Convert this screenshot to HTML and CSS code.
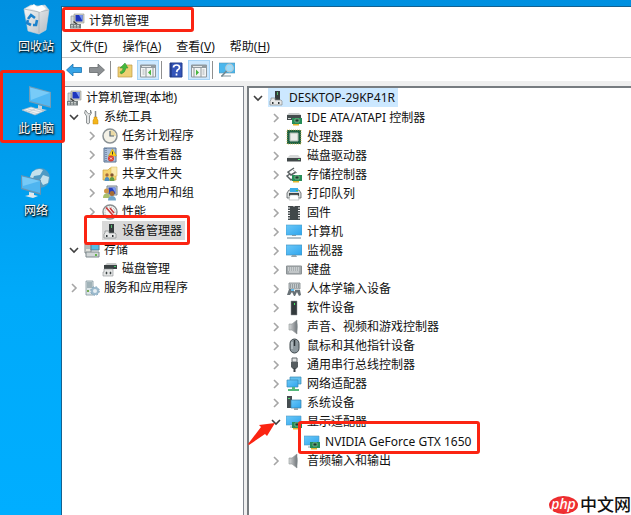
FILE: index.html
```html
<!DOCTYPE html>
<html lang="zh-CN">
<head>
  <meta charset="UTF-8" />
  <meta name="viewport" content="width=device-width, initial-scale=1.0"/>
  <title>计算机管理</title>
  <link rel="stylesheet" href="styles.css">
</head>
<body>

  <!-- shared icons -->
  <svg class="sprite" aria-hidden="true">
    <defs>
      <linearGradient id="screen" x1="0" y1="0" x2="1" y2="1">
        <stop offset="0" stop-color="#6cc8f8"/><stop offset="1" stop-color="#2ea5ee"/>
      </linearGradient>
      <linearGradient id="metal" x1="0" y1="0" x2="1" y2="0">
        <stop offset="0" stop-color="#d8dadb"/><stop offset="1" stop-color="#72777b"/>
      </linearGradient>
      <linearGradient id="bin" x1="0" y1="0" x2="1" y2="1">
        <stop offset="0" stop-color="#f8fafb"/><stop offset="1" stop-color="#b4bcc3"/>
      </linearGradient>
    </defs>
    <symbol id="right" viewBox="0 0 16 16"><path d="M6 4l4 4-4 4" fill="none" stroke="#a6a6a6" stroke-width="1.6"/></symbol>
    <symbol id="down" viewBox="0 0 16 16"><path d="M4 6l4 4 4-4" fill="none" stroke="#404040" stroke-width="1.6"/></symbol>
    <symbol id="manage" viewBox="0 0 16 16">
      <path d="M5 1h10v9H5z" fill="#d6d3c8" stroke="#92958f" stroke-width=".6"/><path d="M6.500 2h7v6.500h-7z" fill="#1e35bd"/><path d="M10 2h3.500v6z" fill="#7795ee"/>
      <path d="M2 3h3v8H2z" fill="#d8dbd9" stroke="#83898a" stroke-width=".6"/><path d="M4.500 8.500L9 12" stroke="#333" stroke-width="1.200"/>
      <path d="M1 11h11v4.500H1z" fill="#777e80"/><path d="M2 12.500h9M2 14h9" stroke="#c9cecb" stroke-dasharray="2 1"/>
    </symbol>
    <symbol id="tools" viewBox="0 0 16 16">
      <path d="M2 1L1 4l2 3v7q1.500 2 3 0V7l2-3-1-3v3L5.500 5 4 4z" transform="translate(-.5)" fill="#e2e4e4" stroke="#777c7e" stroke-width=".8"/>
      <path d="M11.500 2v6" stroke="#858a8d" stroke-width="1.500"/><path d="M10 8h3v2l1 1v4H9v-4l1-1z" fill="#f3b51b" stroke="#c88a10" stroke-width=".5"/>
    </symbol>
    <symbol id="clock" viewBox="0 0 16 16"><circle cx="8" cy="8" r="7" fill="#f4f1e6" stroke="#8b9295" stroke-width="1.500"/><path d="M8 8V2a6 6 0 0 1 6 6z" fill="#ead9a5"/><path d="M8 3v5h4" fill="none" stroke="#536777" stroke-width="1.200"/></symbol>
    <symbol id="event" viewBox="0 0 16 16"><path d="M2 1h12v14H2z" fill="#aabfdb" stroke="#5b7290"/><path d="M4 1v14" stroke="#49617f" stroke-dasharray="1 1"/><path d="M10.500 2l4 7h-8z" fill="#ffd51b" stroke="#c09209" stroke-width=".5"/><path d="M10.500 4.500v3" stroke="#333"/><circle cx="9" cy="11.500" r="3" fill="#dc3c2f"/><path d="M8 10.500l2 2m0-2l-2 2" stroke="#fff" stroke-width=".8"/></symbol>
    <symbol id="share" viewBox="0 0 16 16"><path d="M1 4h5l2-2h6v12H1z" fill="#f5d36f" stroke="#caa03b" stroke-width=".7"/><path d="M9 1h6v9H9z" fill="#faeaae" stroke="#d5b650" stroke-width=".5"/><circle cx="5" cy="9" r="1.700" fill="#a86c3b"/><circle cx="10" cy="9" r="1.700" fill="#805332"/><path d="M2.500 15q0-4 2.500-4t2.500 4z" fill="#508fbd"/><path d="M7.500 15q0-4 2.500-4t2.500 4z" fill="#629e47"/></symbol>
    <symbol id="users" viewBox="0 0 16 16"><path d="M5 1h10v9H5z" fill="#d1d7da" stroke="#7b8791"/><path d="M6.500 2.500h7V9h-7z" fill="#2841bc"/><path d="M10 2.500h3.500V8z" fill="#7e9ced"/><circle cx="4.500" cy="6" r="2.500" fill="#ce9547"/><circle cx="10" cy="8.500" r="2.500" fill="#a66c35"/><path d="M1 13q0-4.500 3.500-4.500T8 13z" fill="#a9bf6c"/><path d="M6 15.500q0-4.500 4-4.500t4 4.500z" fill="#71a6ca"/></symbol>
    <symbol id="perf" viewBox="0 0 16 16"><circle cx="8" cy="8" r="7" fill="#f8f8f6" stroke="#898e90" stroke-width="1.400"/><circle cx="8" cy="8" r="5" fill="none" stroke="#a3a7a8" stroke-dasharray="1 1"/><path d="M4 3.500l8 9M8 4l4 5" stroke="#c93838" stroke-width="1.600"/></symbol>
    <symbol id="device" viewBox="0 0 16 16"><path d="M7 1h5v9H7z" fill="#353b3d"/><path d="M9 2h1v3H9z" fill="#54b86c"/><path d="M3 8h4v2h6l1 1v4H2v-4l1-1z" fill="#e8e9e9" stroke="#85898b" stroke-width=".7"/><path d="M4 12h1.500v2H4zM10 12h1.500v2H10z" fill="#303639"/></symbol>
    <symbol id="storage" viewBox="0 0 16 16"><path d="M1 2h6v9H1z" fill="#e2e3dd" stroke="#80888b"/><path d="M2 4h4M2 6h4" stroke="#889398"/><path d="M7 2h8v6H7z" fill="#55bce5" stroke="#5d7f8e"/><path d="M2 10h13v5H2z" fill="#d1d6d7" stroke="#7f898d"/><path d="M11 12h2v2h-2z" fill="#62b548"/></symbol>
    <symbol id="disk" viewBox="0 0 16 16"><path d="M5 2h9l1 2H3z" fill="#c8caca"/><path d="M2 4h13v4H2z" fill="#3b4244"/><path d="M12 5h2v1h-2z" fill="#40c765"/><path d="M2 8h9v7H1v-4h1z" fill="#e4e5e5" stroke="#8a8f90" stroke-width=".6"/><path d="M4 11h1v2H4zM8 11h1v2H8z" fill="#3d4446" stroke="#3d4446" stroke-width=".5"/></symbol>
    <symbol id="services" viewBox="0 0 16 16"><path d="M2 1h7v14H2z" fill="#dce5e7" stroke="#81959c" stroke-width=".8"/><path d="M3 3h5M3 5h5M3 7h5" stroke="#678089"/><path d="M3 10h2v2H3z" fill="#75ad52"/><circle cx="11" cy="11" r="3" fill="#e6eff4" stroke="#9cbacd" stroke-width="2"/><circle cx="11" cy="11" r="4.300" fill="none" stroke="#769eb8" stroke-dasharray="1.700 1.700"/></symbol>
    <symbol id="card" viewBox="0 0 16 16"><path d="M6 8h10v6H6z" fill="#278d58"/><path d="M9 9h4v3H9z" fill="#173e31" stroke="#a1d6a4" stroke-width=".6"/><path d="M7 14h6v1.500H7z" fill="#e4b62f"/></symbol>
    <symbol id="ide" viewBox="0 0 16 16"><path d="M3 3h10l2 2H1z" fill="#c7caca"/><path d="M1 5h14v5H1z" fill="#444c4d"/><path d="M2 8h3v1H2z" fill="#cfd4d3"/><use href="#card"/></symbol>
    <symbol id="cpu" viewBox="0 0 16 16"><path d="M1 1h14v14H1z" fill="#1e6143"/><path d="M1 1h14v14H1z" fill="none" stroke="#d4bd54" stroke-dasharray="1 1" stroke-width=".8"/><path d="M4 4h8v8H4z" fill="#e9ecea" stroke="#adbbb2"/></symbol>
    <symbol id="drive" viewBox="0 0 16 16"><path d="M4 7h8l3 3H1z" fill="#d6d8d8"/><path d="M1 10h14v3.500H1z" fill="#414849"/><path d="M12 11h2v1h-2z" fill="#55ed70"/></symbol>
    <symbol id="controller" viewBox="0 0 16 16"><path d="M8 1L2 5l3 3 5-3M4 7l-3 2 4 4 5-4" fill="none" stroke="#5a6163" stroke-width="1.500"/><path d="M7 3l4 3" stroke="#9ca1a2"/><use href="#card"/></symbol>
    <symbol id="printer" viewBox="0 0 16 16"><path d="M3 4l-2 3v5h14V7l-2-3z" fill="#dadddd" stroke="#596063" stroke-width=".8"/><path d="M4 2h8v4H4z" fill="#3caee8"/><path d="M3 7h10v3H3z" fill="#3d4446"/><path d="M4 9h8l1 5H3z" fill="#fff" stroke="#939899" stroke-width=".5"/><path d="M10 4h2v1h-2z" fill="#4dbf50"/></symbol>
    <symbol id="chip" viewBox="0 0 16 16"><path d="M4 1h3q1 1.500 2 0h3v14H4z" fill="#41484a"/><path d="M3 1v14M13 1v14" stroke="#444b4e" stroke-width="2" stroke-dasharray="1.500 1"/></symbol>
    <symbol id="computer" viewBox="0 0 16 16"><path d="M0 1h16v10H0z" fill="url(#screen)" stroke="#4c9dc9" stroke-width=".6"/><path d="M6 11h4v1H6z" fill="#889ba5"/><path d="M1 14h14" stroke="#8196a3" stroke-width="1.200"/></symbol>
    <symbol id="monitor" viewBox="0 0 16 16"><path d="M0 2h16v10H0z" fill="url(#screen)" stroke="#4692be" stroke-width=".7"/><path d="M6 12h4l1 2H5z" fill="#94a6ae"/></symbol>
    <symbol id="keyboard" viewBox="0 0 16 16"><path d="M.5 4h15v8H.5z" fill="#a4aaad" stroke="#8b9194"/><path d="M2 6h12M2 8h12" stroke="#edf0f1" stroke-dasharray="1.200 .8"/><path d="M3 10h10" stroke="#dfe2e3"/></symbol>
    <symbol id="hid" viewBox="0 0 16 16"><path d="M3 2h11v6H3z" fill="#c4c9cb" stroke="#7d8588" stroke-width=".8"/><path d="M4 4h9M4 6h9" stroke="#697277" stroke-dasharray="1 1"/><path d="M1 14l2-6h4l2 3V9h5l1 5-2 1-2-4-2 4H8l-2-4-2 3z" fill="#687176"/><path d="M5 8h3v2H5z" fill="#65bbeb"/></symbol>
    <symbol id="software" viewBox="0 0 16 16"><path d="M5 1h6v14H5z" fill="#333a3c" stroke="#8c9395" stroke-width=".5"/><path d="M8 3h1v2H8z" fill="#43e861"/></symbol>
    <symbol id="speaker" viewBox="0 0 16 16"><path d="M3 5h3l5-4v14l-5-4H3z" fill="url(#metal)" stroke="#8e9496" stroke-width=".6"/><path d="M10 1q3 7 0 14" fill="#7b8286"/></symbol>
    <symbol id="mouse" viewBox="0 0 16 16"><rect x="4" y="1" width="9" height="14" rx="4.500" fill="#8e999f" stroke="#3e474b"/><path d="M8.500 2v6" stroke="#293035" stroke-width="1.500"/><path d="M6 4v7" stroke="#d0d8dc"/></symbol>
    <symbol id="usb" viewBox="0 0 16 16"><path d="M6 1h5v4H6z" fill="#e1e3e3" stroke="#62696c"/><path d="M5 5h7v5l-2 2H7l-2-2z" fill="#555c5f"/><path d="M8.500 11v4" stroke="#3c4346" stroke-width="2"/></symbol>
    <symbol id="network" viewBox="0 0 16 16"><path d="M4 1h11v7H4z" fill="#64c1ef" stroke="#3489b5" stroke-width=".7"/><path d="M1 4h11v7H1z" fill="url(#screen)" stroke="#3789b7" stroke-width=".7"/><path d="M6 11h3v2h4v2H2v-2h4z" fill="#55b87b"/></symbol>
    <symbol id="system" viewBox="0 0 16 16"><path d="M1 1h5v12H1z" fill="#454d50"/><path d="M2 3h2v1H2z" fill="#56dc70"/><path d="M5 5h10v8H5z" fill="url(#screen)" stroke="#367fa8" stroke-width=".7"/><path d="M8 13h4v2H8z" fill="#96a4ab"/></symbol>
    <symbol id="display" viewBox="0 0 16 16"><path d="M0 2h15v9H0z" fill="url(#screen)" stroke="#5399bf" stroke-width=".6"/><path d="M4 13h5" stroke="#8fa2aa"/><use href="#card"/></symbol>
    <symbol id="arrow" viewBox="0 0 16 16"><path d="M.5 8L7 2v3.500h8.500v5H7V14z" stroke-width=".8" stroke-linejoin="round"/></symbol>
    <symbol id="arrowright" viewBox="0 0 16 16"><path d="M15.500 8L9 2v3.500H.5v5H9V14z" stroke-width=".8" stroke-linejoin="round"/></symbol>
    <symbol id="up" viewBox="0 0 16 16"><path d="M1 5h7l1-2h6v12H1z" fill="#eed073" stroke="#bf9846" stroke-width=".7"/><path d="M3 10q3-1 3-4H3l5-5 3 5H9q-1 5-5 6z" fill="#45b83c" stroke="#348b32" stroke-width=".5"/></symbol>
    <symbol id="paneleft" viewBox="0 0 16 16"><path d="M.5 3h15v12H.5z" fill="#f4f5f5" stroke="#91989c"/><path d="M1 3h14v3H1z" fill="#929ba0"/><path d="M2 4.500h9" stroke="#e6e9ea"/><path d="M6 6v9M13 6v9" stroke="#8f979b"/><path d="M2.500 8h2m-2 2h2m-2 2h2" stroke="#a9b2b6"/><path d="M11 7.500v6L8 10.500z" fill="#47b53f"/></symbol>
    <symbol id="paneright" viewBox="0 0 16 16"><path d="M.5 3h15v12H.5z" fill="#f4f5f5" stroke="#91989c"/><path d="M1 3h14v3H1z" fill="#929ba0"/><path d="M2 4.500h9" stroke="#e6e9ea"/><path d="M3 6v9M10 6v9" stroke="#8f979b"/><path d="M11.500 8h2m-2 2h2m-2 2h2" stroke="#a9b2b6"/><path d="M5 7.500v6l3-3z" fill="#47b53f"/></symbol>
    <symbol id="help" viewBox="0 0 16 16"><path d="M2 1h12v14H2z" fill="#3455ba" stroke="#223e8d"/><path d="M3 1v14" stroke="#1d3171"/><path d="M5.500 5.500Q5.500 3 8.500 3T11.500 5.500Q11.500 7 9.500 8L8.500 10M8.500 11.500v2" fill="none" stroke="#fff" stroke-width="1.700"/></symbol>
    <symbol id="scan" viewBox="0 0 16 16"><path d="M0 1h16v10H0z" fill="#4bb7ed" stroke="#5795b4" stroke-width=".6"/><path d="M2 14h10" stroke="#7f929b"/><circle cx="10.500" cy="6" r="3.800" fill="#9bdcfb" stroke="#b7c7cf" stroke-width="1.200"/><path d="M7.500 9L2.500 14.500" stroke="#718790" stroke-width="1.500"/></symbol>
  </svg>

  <div class="screen">
    <nav class="desktop">
      <a class="shortcut" href="#">
        <svg viewBox="0 0 32 32"><path d="M4 6l7-4 7 1 7-1 4 5-3 20-7 4-11-3z" fill="url(#bin)" stroke="#cbd2d7" stroke-width=".6"/><path d="M4 6l15 3 10-2M19 9v21" fill="none" stroke="#a9b2b9" stroke-width=".8"/><path d="M9 5l5-4 3 3 5-2 4 4-6 3z" fill="#fff"/><path d="M8 16l3-4 4 3M17 17l-1 5h-3M11 22l-4-2 1-3" fill="none" stroke="#1c82cc" stroke-width="2.600"/></svg>
        <span>回收站</span>
      </a>
      <a class="shortcut" href="#">
        <svg viewBox="0 0 32 32"><path d="M9 1l22 6v16L9 17z" fill="#6f9db8"/><path d="M10 2.500l20 5.300v13.500L10 16z" fill="#50b8f4"/><path d="M10 2.500l20 5.300L11 15z" fill="#78cbf8"/><path d="M18 20l4 1v3l5 1-6 2-8-2 5-2z" fill="#c9d4db"/><path d="M2 25l9-3 13 4-9 4z" fill="#eef1f3" stroke="#a6b8c2" stroke-width=".7"/><path d="M5 25l13 4M8 24l13 3M8 27l7-3" stroke="#b1bfc7" stroke-width=".6"/></svg>
        <span>此电脑</span>
      </a>
      <a class="shortcut" href="#">
        <svg viewBox="0 0 32 32"><circle cx="20" cy="11" r="10" fill="#4f9bc4"/><path d="M12 5q6-5 11-2l-3 5-6 1-2 5-2-4zM23 8l6 2-1 6-5 2-3-5z" fill="#c4e1ec"/><path d="M1 8l20 5v15L1 22z" fill="#6494b4"/><path d="M2 9.500l18 4.500v12L2 21z" fill="#4fb5f0"/><path d="M2 9.500l18 4.500L3 19z" fill="#76caf7"/><path d="M9 25l5 1v2l4 1-5 2-8-2 4-1z" fill="#dfe7eb"/></svg>
        <span>网络</span>
      </a>
    </nav>

    <main class="window">
      <header class="titlebar"><svg class="icon"><use href="#manage"/></svg><span>计算机管理</span></header>
      <nav class="menubar">
        <button>文件(<u>F</u>)</button>
        <button>操作(<u>A</u>)</button>
        <button>查看(<u>V</u>)</button>
        <button>帮助(<u>H</u>)</button>
      </nav>
      <div class="toolbar">
        <button class="tool back" aria-label="后退"><svg class="icon"><use href="#arrow"/></svg></button>
        <button class="tool forward" aria-label="前进"><svg class="icon"><use href="#arrowright"/></svg></button>
        <i class="sep"></i>
        <button class="tool" aria-label="向上"><svg class="icon"><use href="#up"/></svg></button>
        <button class="tool on" aria-label="控制台树"><svg class="icon"><use href="#paneleft"/></svg></button>
        <i class="sep"></i>
        <button class="tool" aria-label="帮助"><svg class="icon"><use href="#help"/></svg></button>
        <button class="tool on" aria-label="操作窗格"><svg class="icon"><use href="#paneright"/></svg></button>
        <i class="sep"></i>
        <button class="tool" aria-label="扫描硬件"><svg class="icon"><use href="#scan"/></svg></button>
      </div>

      <div class="panes">
        <section class="pane console">
          <ul class="tree">
            <li><div class="row"><span class="node"><svg class="icon"><use href="#manage"/></svg>计算机管理(本地)</span></div></li>
            <li><div class="row"><button class="twisty" aria-label="折叠"><svg class="icon"><use href="#down"/></svg></button><span class="node"><svg class="icon"><use href="#tools"/></svg>系统工具</span></div>
              <ul>
                <li><div class="row"><button class="twisty" aria-label="展开"><svg class="icon"><use href="#right"/></svg></button><span class="node"><svg class="icon"><use href="#clock"/></svg>任务计划程序</span></div></li>
                <li><div class="row"><button class="twisty" aria-label="展开"><svg class="icon"><use href="#right"/></svg></button><span class="node"><svg class="icon"><use href="#event"/></svg>事件查看器</span></div></li>
                <li><div class="row"><button class="twisty" aria-label="展开"><svg class="icon"><use href="#right"/></svg></button><span class="node"><svg class="icon"><use href="#share"/></svg>共享文件夹</span></div></li>
                <li><div class="row"><button class="twisty" aria-label="展开"><svg class="icon"><use href="#right"/></svg></button><span class="node"><svg class="icon"><use href="#users"/></svg>本地用户和组</span></div></li>
                <li><div class="row"><button class="twisty" aria-label="展开"><svg class="icon"><use href="#right"/></svg></button><span class="node"><svg class="icon"><use href="#perf"/></svg>性能</span></div></li>
                <li><div class="row leaf"><span class="node current"><svg class="icon"><use href="#device"/></svg>设备管理器</span></div></li>
              </ul>
            </li>
            <li><div class="row"><button class="twisty" aria-label="折叠"><svg class="icon"><use href="#down"/></svg></button><span class="node"><svg class="icon"><use href="#storage"/></svg>存储</span></div>
              <ul>
                <li><div class="row leaf"><span class="node"><svg class="icon"><use href="#disk"/></svg>磁盘管理</span></div></li>
              </ul>
            </li>
            <li><div class="row"><button class="twisty" aria-label="展开"><svg class="icon"><use href="#right"/></svg></button><span class="node"><svg class="icon"><use href="#services"/></svg>服务和应用程序</span></div></li>
          </ul>
        </section>

        <section class="pane devices">
          <ul class="tree">
            <li><div class="row"><button class="twisty" aria-label="折叠"><svg class="icon"><use href="#down"/></svg></button><span class="node selected"><svg class="icon"><use href="#device"/></svg>DESKTOP-29KP41R</span></div>
              <ul>
                <li><div class="row"><button class="twisty" aria-label="展开"><svg class="icon"><use href="#right"/></svg></button><span class="node"><svg class="icon"><use href="#ide"/></svg>IDE ATA/ATAPI 控制器</span></div></li>
                <li><div class="row"><button class="twisty" aria-label="展开"><svg class="icon"><use href="#right"/></svg></button><span class="node"><svg class="icon"><use href="#cpu"/></svg>处理器</span></div></li>
                <li><div class="row"><button class="twisty" aria-label="展开"><svg class="icon"><use href="#right"/></svg></button><span class="node"><svg class="icon"><use href="#drive"/></svg>磁盘驱动器</span></div></li>
                <li><div class="row"><button class="twisty" aria-label="展开"><svg class="icon"><use href="#right"/></svg></button><span class="node"><svg class="icon"><use href="#controller"/></svg>存储控制器</span></div></li>
                <li><div class="row"><button class="twisty" aria-label="展开"><svg class="icon"><use href="#right"/></svg></button><span class="node"><svg class="icon"><use href="#printer"/></svg>打印队列</span></div></li>
                <li><div class="row"><button class="twisty" aria-label="展开"><svg class="icon"><use href="#right"/></svg></button><span class="node"><svg class="icon"><use href="#chip"/></svg>固件</span></div></li>
                <li><div class="row"><button class="twisty" aria-label="展开"><svg class="icon"><use href="#right"/></svg></button><span class="node"><svg class="icon"><use href="#computer"/></svg>计算机</span></div></li>
                <li><div class="row"><button class="twisty" aria-label="展开"><svg class="icon"><use href="#right"/></svg></button><span class="node"><svg class="icon"><use href="#monitor"/></svg>监视器</span></div></li>
                <li><div class="row"><button class="twisty" aria-label="展开"><svg class="icon"><use href="#right"/></svg></button><span class="node"><svg class="icon"><use href="#keyboard"/></svg>键盘</span></div></li>
                <li><div class="row"><button class="twisty" aria-label="展开"><svg class="icon"><use href="#right"/></svg></button><span class="node"><svg class="icon"><use href="#hid"/></svg>人体学输入设备</span></div></li>
                <li><div class="row"><button class="twisty" aria-label="展开"><svg class="icon"><use href="#right"/></svg></button><span class="node"><svg class="icon"><use href="#software"/></svg>软件设备</span></div></li>
                <li><div class="row"><button class="twisty" aria-label="展开"><svg class="icon"><use href="#right"/></svg></button><span class="node"><svg class="icon"><use href="#speaker"/></svg>声音、视频和游戏控制器</span></div></li>
                <li><div class="row"><button class="twisty" aria-label="展开"><svg class="icon"><use href="#right"/></svg></button><span class="node"><svg class="icon"><use href="#mouse"/></svg>鼠标和其他指针设备</span></div></li>
                <li><div class="row"><button class="twisty" aria-label="展开"><svg class="icon"><use href="#right"/></svg></button><span class="node"><svg class="icon"><use href="#usb"/></svg>通用串行总线控制器</span></div></li>
                <li><div class="row"><button class="twisty" aria-label="展开"><svg class="icon"><use href="#right"/></svg></button><span class="node"><svg class="icon"><use href="#network"/></svg>网络适配器</span></div></li>
                <li><div class="row"><button class="twisty" aria-label="展开"><svg class="icon"><use href="#right"/></svg></button><span class="node"><svg class="icon"><use href="#system"/></svg>系统设备</span></div></li>
                <li><div class="row"><button class="twisty" aria-label="折叠"><svg class="icon"><use href="#down"/></svg></button><span class="node"><svg class="icon"><use href="#display"/></svg>显示适配器</span></div>
                  <ul>
                    <li><div class="row leaf"><span class="node"><svg class="icon"><use href="#display"/></svg>NVIDIA GeForce GTX 1650</span></div></li>
                  </ul>
                </li>
                <li><div class="row"><button class="twisty" aria-label="展开"><svg class="icon"><use href="#right"/></svg></button><span class="node"><svg class="icon"><use href="#speaker"/></svg>音频输入和输出</span></div></li>
              </ul>
            </li>
          </ul>
        </section>
      </div>
    </main>

    <!-- red marks drawn over the window -->
    <div class="mark mark-title"></div>
    <div class="mark mark-pc"></div>
    <div class="mark mark-manager"></div>
    <div class="mark mark-gpu"></div>
    <svg class="pointer" viewBox="0 0 28 24"><path d="M0 22L13 5l-2-2 16-2-8 13-2-2L1 23z" fill="#fb2412"/></svg>

    <div class="watermark"><span class="php">php</span><span>中文网</span></div>
  </div>

</body>
</html>
```
FILE: styles.css
```css
* {
  box-sizing: border-box;
}

body {
  margin: 0;
  font-family: "Noto Sans", "Noto Sans CJK SC", sans-serif;
  font-size: 12px;
  line-height: 16px;
  color: #111;
}

button {
  font: inherit;
  color: inherit;
  background: none;
  border: none;
  padding: 0;
}

ul {
  list-style: none;
  margin: 0;
  padding: 0;
}

.sprite {
  position: absolute;
  width: 0;
  height: 0;
}

.icon {
  width: 16px;
  height: 16px;
  flex: none;
  display: block;
}

.screen {
  position: relative;
  display: flex;
  min-height: 100vh;
  overflow: hidden;
  padding-top: 6px;
  background: linear-gradient(#0090e0, #0098e8 100px, #00aafa 300px, #00aeff);
}

/* desktop */
.desktop {
  width: 61px;
  flex: none;
  display: flex;
  flex-direction: column;
  gap: 30px;
  padding-left: 11px;
  margin-top: -3px;
}

.shortcut {
  display: flex;
  flex-direction: column;
  align-items: center;
  gap: 4px;
  color: #fff;
  text-decoration: none;
  text-shadow: 0 1px 2px #000, 1px 1px 2px #000;
}

.shortcut svg {
  width: 32px;
  height: 32px;
}

/* window */
.window {
  flex: 1;
  min-width: 0;
  display: flex;
  flex-direction: column;
  background: #fff;
  border-left: 1px solid #14618f;
  border-top: 1px solid #14618f;
}

.titlebar {
  display: flex;
  align-items: center;
  gap: 4px;
  height: 28px;
  padding-left: 7px;
}

.menubar {
  display: flex;
  gap: 15px;
  height: 23px;
  padding-top: 2px;
  padding-left: 8px;
  border-bottom: 1px solid #c4c4c4;
}

.toolbar {
  display: flex;
  align-items: center;
  gap: 1px;
  height: 23px;
  padding-left: 1px;
}

.tool {
  display: flex;
  align-items: center;
  justify-content: center;
  width: 22px;
  height: 20px;
}

.tool.on {
  background: #cce8ff;
  border: 1px solid #a6d4f7;
}

.back {
  fill: #36a3e6;
  stroke: #1b74b1;
}

.forward {
  fill: #8c9093;
  stroke: #666a6c;
}

.sep {
  width: 1px;
  height: 18px;
  margin: 0 2px 0 1px;
  background: #8f8f8f;
}

.panes {
  flex: 1;
  display: flex;
  gap: 3px;
  padding-top: 5px;
  background: #efefef;
}

.pane {
  background: #fff;
  border-top: 1px solid #828790;
}

.console {
  width: 32%;
  padding: 1px 0 0 4px;
  border-right: 1px solid #828790;
}

.devices {
  flex: 1;
  padding-left: 1px;
  border-top: 2px solid #777c80;
  border-left: 2px solid #777c80;
}

/* trees */
.row {
  display: flex;
  align-items: center;
  height: 19px;
  white-space: nowrap;
}

.tree ul {
  padding-left: 18px;
}

.devices ul ul {
  padding-top: 1px;
}

.twisty {
  width: 16px;
  height: 16px;
  margin-right: 2px;
}

.leaf {
  padding-left: 18px;
}

.node {
  display: flex;
  align-items: center;
  gap: 5px;
  height: 19px;
  padding-right: 3px;
}

.console .node {
  gap: 4px;
}

.selected {
  background: #cce8ff;
}

.current {
  background: #d9d9d9;
}

/* marks */
.mark {
  position: absolute;
  border: 3px solid #fb2412;
  border-radius: 3px;
}

.mark-title {
  left: 62px;
  top: 7px;
  width: 132px;
  height: 25px;
}

.mark-pc {
  left: 0;
  top: 70px;
  width: 65px;
  height: 73px;
}

.mark-manager {
  left: 84px;
  top: 215px;
  width: 106px;
  height: 30px;
}

.mark-gpu {
  left: 298px;
  top: 421px;
  width: 182px;
  height: 33px;
}

.pointer {
  position: absolute;
  left: 248px;
  top: 422px;
  width: 28px;
  height: 24px;
}

.watermark {
  position: absolute;
  right: 0;
  bottom: 0;
  display: flex;
  align-items: center;
  gap: 2px;
  font-size: 17px;
  line-height: 20px;
  font-weight: 500;
}

.php {
  width: 29px;
  height: 18px;
  border-radius: 50%;
  background: radial-gradient(#fa4545, #e51c20);
  color: #fff;
  font-size: 14px;
  line-height: 15px;
  font-style: italic;
  text-align: center;
}
```
